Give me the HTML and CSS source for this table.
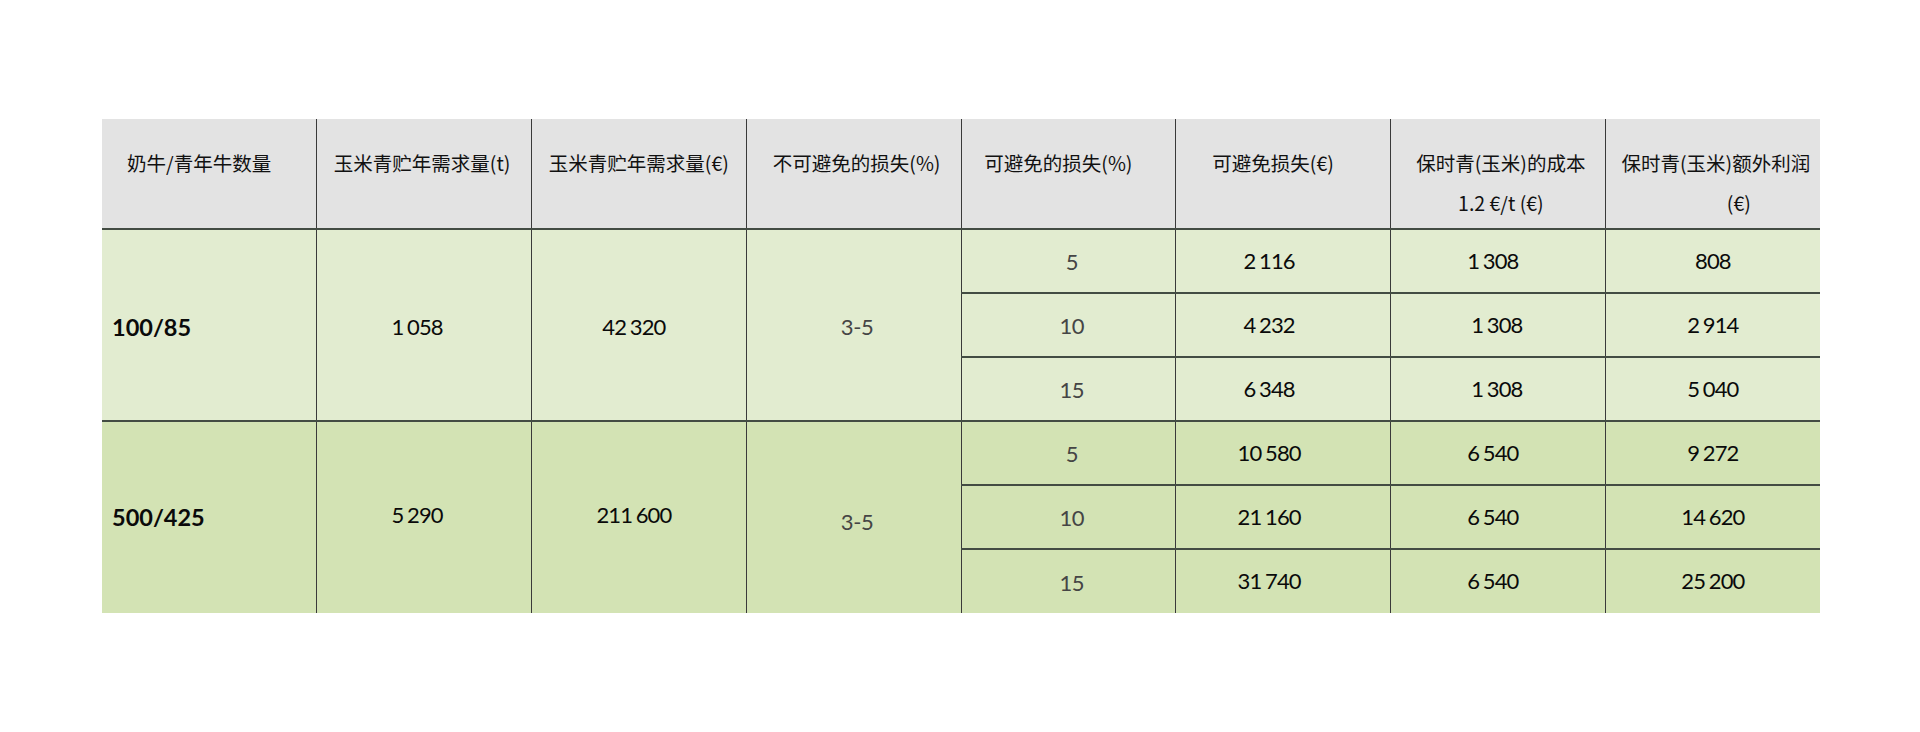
FILE: index.html
```html
<!DOCTYPE html>
<html lang="zh">
<head>
<meta charset="utf-8">
<title>保时青效益表</title>
<link rel="stylesheet" href="styles.css">
</head>
<body>
<div class="wrap">
<table class="sheet">
  <colgroup>
    <col class="col"><col class="col"><col class="col"><col class="col">
    <col class="col"><col class="col"><col class="col"><col class="col">
  </colgroup>
  <thead>
    <tr class="hd">
      <th class="h1">奶牛/青年牛数量</th>
      <th class="h2">玉米青贮年需求量(t)</th>
      <th class="h3">玉米青贮年需求量(€)</th>
      <th class="h4">不可避免的损失(%)</th>
      <th class="h5">可避免的损失(%)</th>
      <th class="h6">可避免损失(€)</th>
      <th class="h7">保时青(玉米)的成本<br>1.2 €/t (€)</th>
      <th class="h8">保时青(玉米)额外利润<br><span class="eur">(€)</span></th>
    </tr>
  </thead>
  <tbody>
    <tr class="g1">
      <td rowspan="3" class="c1 top1">100/85</td>
      <td rowspan="3" class="c2 top1">1 058</td>
      <td rowspan="3" class="c3 top1">42 320</td>
      <td rowspan="3" class="c4 light top1">3-5</td>
      <td class="c5 light">5</td>
      <td class="c6">2 116</td>
      <td class="c7">1 308</td>
      <td class="c8">808</td>
    </tr>
    <tr class="g1">
      <td class="c5 light">10</td>
      <td class="c6">4 232</td>
      <td class="c7 c7b">1 308</td>
      <td class="c8">2 914</td>
    </tr>
    <tr class="g1">
      <td class="c5 light">15</td>
      <td class="c6">6 348</td>
      <td class="c7 c7b">1 308</td>
      <td class="c8">5 040</td>
    </tr>
    <tr class="g2">
      <td rowspan="3" class="c1 end top2">500/425</td>
      <td rowspan="3" class="c2 end up2">5 290</td>
      <td rowspan="3" class="c3 end up2">211 600</td>
      <td rowspan="3" class="c4 light end down2">3-5</td>
      <td class="c5 light">5</td>
      <td class="c6">10 580</td>
      <td class="c7">6 540</td>
      <td class="c8">9 272</td>
    </tr>
    <tr class="g2">
      <td class="c5 light">10</td>
      <td class="c6">21 160</td>
      <td class="c7">6 540</td>
      <td class="c8">14 620</td>
    </tr>
    <tr class="g2 last">
      <td class="c5 light end">15</td>
      <td class="c6 end">31 740</td>
      <td class="c7 end">6 540</td>
      <td class="c8 end">25 200</td>
    </tr>
  </tbody>
</table>
</div>
</body>
</html>
```

FILE: styles.css
```css
html, body {
  margin: 0;
  padding: 0;
  background: #ffffff;
}

body {
  font-family: Lato, "Noto Sans CJK SC", sans-serif;
  color: #141414;
}

.wrap {
  padding: 119px 0 0 102px;
}

.sheet {
  border-collapse: collapse;
  table-layout: fixed;
  width: 1718px;
}

.col {
  width: 214.75px;
}

/* header */
.hd {
  height: 110px;
}

.hd th {
  background: #e3e3e3;
  font-family: "Noto Sans CJK SC", Lato, sans-serif;
  font-weight: 400;
  font-size: 19.5px;
  line-height: 40px;
  color: #111111;
  white-space: nowrap;
  vertical-align: top;
  text-align: center;
  padding: 24px 0 0 0;
  border-right: 1px solid #3a3a3a;
  border-bottom: 2px solid #434c43;
}

.hd th:last-child {
  border-right: none;
}

.hd .h1 { padding-right: 20px; }
.hd .h2 { padding-right: 4px; }
.hd .h4 { padding-left: 6px; }
.hd .h5 { padding-right: 20px; }
.hd .h6 { padding-right: 20px; }
.hd .h7 { padding-left: 6px; }
.hd .h8 { padding-left: 6px; }

.hd .eur {
  display: inline-block;
  padding-left: 46px;
}

/* body */
tbody tr {
  height: 64px;
}

tbody td {
  padding: 0 0 2px 0;
  text-align: center;
  vertical-align: middle;
  font-size: 22px;
  letter-spacing: -0.9px;
  word-spacing: -1px;
  color: #0a0a0a;
  border-right: 1px solid #3a3a3a;
  border-bottom: 2px solid #434c43;
}

tbody td:last-child {
  border-right: none;
}

tbody td.end {
  border-bottom: none;
}

.g1 td {
  background: #e2ecd0;
}

.g2 td {
  background: #d3e3b4;
}

tbody td.c1 {
  text-align: left;
  padding-left: 10px;
  font-weight: 700;
  font-size: 23.5px;
  letter-spacing: 0;
}

tbody td.c2 { padding-right: 14px; }
tbody td.c3 { padding-right: 10px; }
tbody td.c4 { padding-left: 7px; }
tbody td.c5 { padding-left: 7px; }
tbody td.c6 { padding-right: 28px; }
tbody td.c7 { padding-right: 10px; }
tbody td.c7b { padding-right: 2px; }

tbody td.light {
  font-weight: 400;
  font-size: 22px;
  letter-spacing: -0.3px;
  color: #454545;
  padding-top: 1px;
  padding-bottom: 0;
}

tbody td.top1 { padding-top: 3px; padding-bottom: 0; }
tbody td.top2 { padding-top: 0; padding-bottom: 2px; }
tbody td.up2 { padding-top: 0; padding-bottom: 6px; }
tbody td.down2 { padding-top: 8px; padding-bottom: 0; }
```
